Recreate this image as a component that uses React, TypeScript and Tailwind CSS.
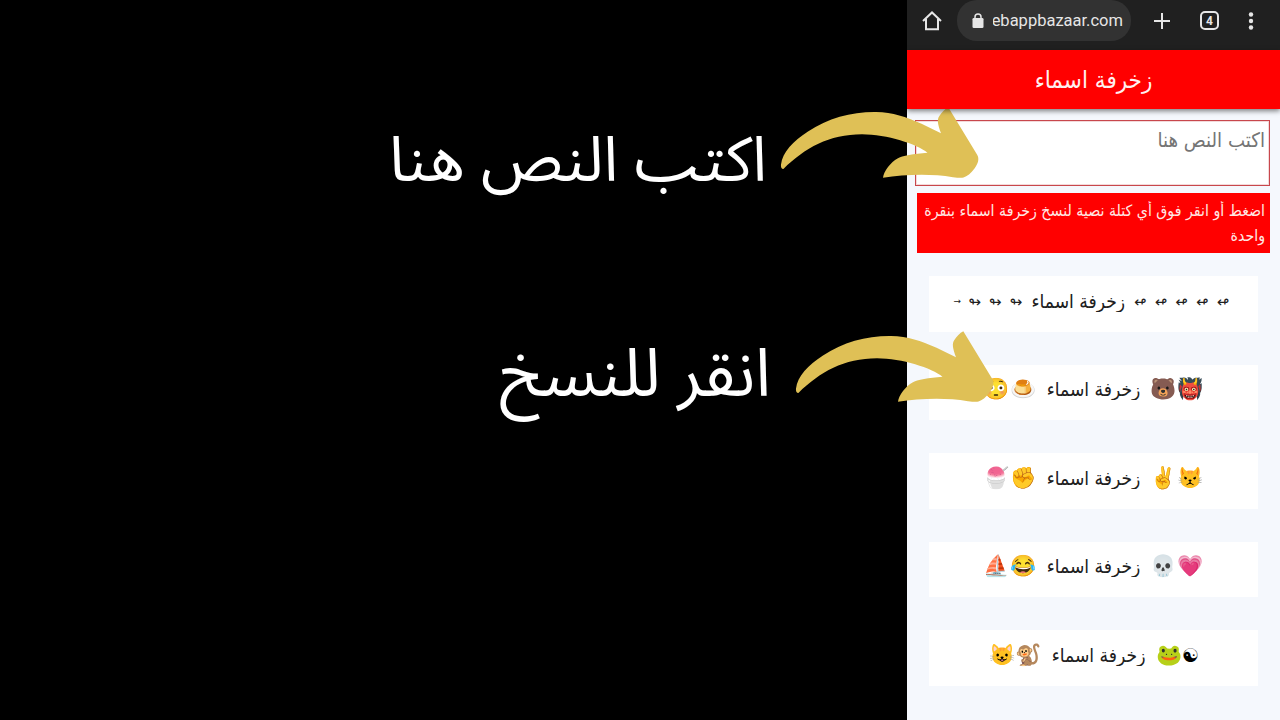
import type { ReactNode } from "react";

const title = "زخرفة اسماء";

function Arrow({ className }: { className: string }) {
  return (
    <svg className={className} width="200" height="75" viewBox="780 106 200 75" fill="#dfc056">
      <path d="M783.4 169C781.5 169 780.6 167 781 164.5C782.5 152 793 141.5 808 131.5C828 118 852 111.700 876 112C893 112.200 906 117 921 123.500L941 133.200C937.500 124 937 119.500 939.200 116.300C941.500 112.500 945 109 948.300 107.300L977 154.500C979.500 158.500 978.500 163 974.500 168.500C971 173.200 967 176.500 963.500 177.500C961 178.300 957.500 177.600 953 177.200C930 173.200 904 174.500 883 177.700C883.500 171.500 891 162 897.500 158.500C902 155.500 914 154 927.500 152.800C917 144 887 134.500 862 134.300C829 134.300 805 148 783.400 169Z" />
    </svg>
  );
}

function Card({ children }: { children: ReactNode }) {
  return (
    <div dir="ltr" className="flex h-[55.500px] shrink-0 items-start justify-center whitespace-pre bg-white pt-[10.500px] text-[19px] leading-[28px] text-[#202020]">
      {children}
    </div>
  );
}

function Name() {
  return <span dir="rtl" className="scale-y-110 text-[17.200px]">{title}</span>;
}

function EmojiCard({ left, right, symbol }: { left: string; right: string; symbol?: string }) {
  return (
    <Card>
      <span className="mr-[10.500px] font-['Noto_Color_Emoji'] text-[21px]">{left}</span>
      <Name />
      <span className="ml-[10.500px] font-['Noto_Color_Emoji'] text-[21px]">{right}</span>
      {symbol && <span className="w-[16px] text-[19px] font-bold text-black">{symbol}</span>}
    </Card>
  );
}

function Arrows({ glyph, count }: { glyph: string; count: number }) {
  return (
    <>
      {Array.from({ length: count }, (_, i) => (
        <span key={i} className="flex w-[20.700px] justify-center pt-px text-[15px]">{glyph}</span>
      ))}
    </>
  );
}

export default function App() {
  return (
    <div className="relative flex h-[720px] w-[1280px] overflow-hidden bg-black font-['Noto_Sans','Noto_Sans_Arabic',sans-serif]">
      <main dir="rtl" className="flex w-[907px] shrink-0 flex-col text-white">
        <h1 className="mt-[107px] mr-[140px] h-[100px] whitespace-nowrap text-[62.600px] leading-[100px]">اكتب النص هنا</h1>
        <h2 className="mt-[114px] mr-[136px] h-[100px] whitespace-nowrap text-[66.800px] leading-[100px]">انقر للنسخ</h2>
      </main>
      <section className="flex w-[373px] shrink-0 flex-col bg-[#f5f8fd] font-['DejaVu_Sans',sans-serif]">
        <header className="flex h-[50px] shrink-0 bg-[#202020] text-[#e6e6e6]">
          <svg className="ml-[14px] mt-[10px]" width="22" height="22" viewBox="0 0 22 22" fill="none" stroke="currentColor" strokeWidth="2">
            <path d="M2 11L11 2.500L20 11M5 9V19.200H17V9" />
          </svg>
          <div className="ml-[14px] flex h-[41px] w-[174px] rounded-[20px] bg-[#323232]">
            <svg className="ml-[15px] mt-[13px]" width="12" height="15" viewBox="0 0 12 15">
              <path d="M3 6V4a3 3 0 0 1 6 0v2" fill="none" stroke="currentColor" strokeWidth="1.500" />
              <rect x="0.500" y="5" width="11" height="10" rx="1.300" fill="currentColor" />
            </svg>
            <div dir="ltr" className="ml-[9px] mt-[9px] flex w-[130px] justify-end overflow-hidden whitespace-nowrap font-[Roboto,sans-serif] text-[16.500px] leading-[24px]">ebappbazaar.com</div>
          </div>
          <svg className="ml-[23px] mt-[13px]" width="16" height="16" viewBox="0 0 16 16" stroke="currentColor" strokeWidth="2">
            <path d="M8 0V16M0 8H16" />
          </svg>
          <div className="ml-[30px] mt-[11px] flex h-[19px] w-[19px] items-center justify-center rounded-[5px] border-2 border-current font-[Roboto,sans-serif] text-[12px] font-bold">4</div>
          <svg className="ml-[29px] mt-[12px]" width="6" height="18" viewBox="0 0 6 18" fill="currentColor">
            <circle cx="3" cy="2.500" r="2.200" /><circle cx="3" cy="9" r="2.200" /><circle cx="3" cy="15.500" r="2.200" />
          </svg>
        </header>
        <div dir="rtl" className="z-10 flex h-[59px] shrink-0 items-center justify-center bg-[#ff0000] text-[21.600px] text-[#fff0f0] shadow-[0_2px_5px_rgba(0,0,0,0.5)]"><span className="translate-y-px scale-y-110">{title}</span></div>
        <div dir="rtl" className="ml-[8px] mt-[11px] flex h-[66px] w-[355px] shrink-0 items-start border border-[#c8474c] bg-white pr-1 pt-1 text-[18.200px] leading-[30px] text-[#757575] shadow-[inset_0_0_0_1px_#f3d9da]"><span className="scale-y-110">اكتب النص هنا</span></div>
        <div dir="rtl" className="ml-[10px] mt-[7px] flex h-[60px] w-[353px] shrink-0 flex-col items-start bg-[#ff0000] pr-[5px] pt-[6px] text-[14.200px] leading-[25px] text-[#ffe8e4]">
          <div className="scale-y-110 whitespace-nowrap">اضغط أو انقر فوق أي كتلة نصية لنسخ زخرفة اسماء بنقرة</div>
          <div className="scale-y-110">واحدة</div>
        </div>
        <div className="ml-[22px] mt-[23px] flex w-[329px] flex-col gap-[33px]">
          <Card>
            <span className="-ml-[3px] flex w-[14px] justify-center text-[9px]">→</span>
            <Arrows glyph="↬" count={3} />
            <span className="mx-[5px] flex"><Name /></span>
            <Arrows glyph="↫" count={5} />
          </Card>
          <EmojiCard left="😳🍮" right="🐻👹" />
          <EmojiCard left="🍧✊" right="✌️😾" />
          <EmojiCard left="⛵😂" right="💀💗" />
          <EmojiCard left="😺🐒" right="🐸" symbol="☯" />
        </div>
      </section>
      <Arrow className="absolute left-[780px] top-[106px]" />
      <Arrow className="absolute left-[795px] top-[329.700px]" />
    </div>
  );
}
